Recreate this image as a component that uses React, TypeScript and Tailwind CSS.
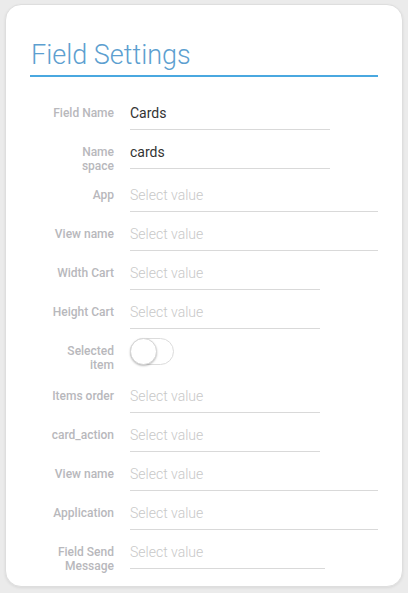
import React from "react";

type Row = {
  label: string[];
  value?: string;
  width: string;
  toggle?: boolean;
};

const rows: Row[] = [
  { label: ["Field Name"], value: "Cards", width: "w-[200px]" },
  { label: ["Name", "space"], value: "cards", width: "w-[200px]" },
  { label: ["App"], width: "w-[248px]" },
  { label: ["View name"], width: "w-[248px]" },
  { label: ["Width Cart"], width: "w-[190px]" },
  { label: ["Height Cart"], width: "w-[190px]" },
  { label: ["Selected", "item"], width: "", toggle: true },
  { label: ["Items order"], width: "w-[190px]" },
  { label: ["card_action"], width: "w-[190px]" },
  { label: ["View name"], width: "w-[248px]" },
  { label: ["Application"], width: "w-[248px]" },
  { label: ["Field Send", "Message"], width: "w-[195px]" },
];

function Toggle() {
  return (
    <div className="relative h-[27px] w-[44px] rounded-full border border-[#dcdcdc] bg-white">
      <div className="absolute -left-px -top-px h-[27px] w-[27px] rounded-full border border-[#d6d6d6] bg-white shadow-[0_1px_2px_rgba(0,0,0,0.25)]" />
    </div>
  );
}

export default function App() {
  return (
    <div
      className="min-h-[593px] w-full bg-[#ebebeb] pl-[5px] pr-[5px] pt-[4px]"
      style={{ fontFamily: "Roboto, 'Liberation Sans', sans-serif" }}
    >
      <div className="h-[583px] w-[398px] rounded-[16px] border border-[#dedede] bg-white px-[24px] pt-[30px] shadow-[0_1px_3px_rgba(0,0,0,0.08)]">
        <h1 className="pl-[1px] text-[27px] font-light leading-[40px] text-[#5d9fd0]">
          Field Settings
        </h1>
        <div className="h-[1.5px] w-full bg-[#4aa8e0]" />

        <div className="mt-[23px] flex flex-col">
          {rows.map((row, i) => (
            <div
              key={i}
              className={`flex items-start gap-4 ${row.toggle ? "mb-[11px]" : "mb-[9px]"}`}
            >
              <div className="w-[84px] shrink-0 pt-[6px] text-right text-[12px] font-medium leading-[14px] text-[#b8b8bc]">
                {row.label.map((l, j) => (
                  <div key={j}>{l}</div>
                ))}
              </div>
              {row.toggle ? (
                <Toggle />
              ) : (
                <div
                  className={`${row.width} h-[30px] border-b border-[#d9d9d9] pt-[3px] text-[14px] leading-[20px]`}
                >
                  {row.value ? (
                    <span className="text-[#333333]">{row.value}</span>
                  ) : (
                    <span className="font-light text-[#c8c8c8]">Select value</span>
                  )}
                </div>
              )}
            </div>
          ))}
        </div>
      </div>
    </div>
  );
}
